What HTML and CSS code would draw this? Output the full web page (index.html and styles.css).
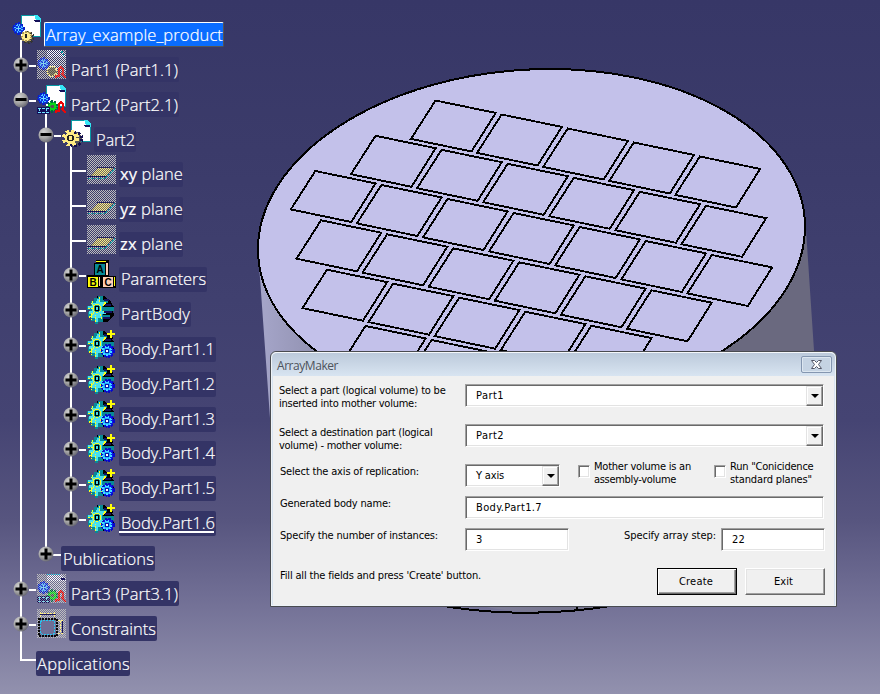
FILE: index.html
```html
<!DOCTYPE html>
<html lang="en">
<head>
<meta charset="utf-8">
<title>ArrayMaker</title>
<link rel="stylesheet" href="styles.css">
</head>
<body>
<svg class="defs" width="0" height="0" aria-hidden="true">
  <defs>
    <path id="dots" fill="none" stroke-dasharray="1 1" d="M0 .5h29M1 1.5h28M0 2.5h29M1 3.5h28M0 4.5h29M1 5.5h28M0 6.5h29M1 7.5h28M0 8.5h29M1 9.5h28M0 10.5h29M1 11.5h28M0 12.5h29M1 13.5h28M0 14.5h29M1 15.5h28M0 16.5h29M1 17.5h28M0 18.5h29M1 19.5h28M0 20.5h29M1 21.5h28M0 22.5h29M1 23.5h28M0 24.5h29M1 25.5h28M0 26.5h29M1 27.5h28M0 28.5h29"/>
    <clipPath id="sheet"><path d="M10 0h14l5 5v17H10z"/></clipPath>
    <clipPath id="slab"><path d="M11 13h15l-7 8H4z"/></clipPath>
    <clipPath id="gears"><path d="M0 7h29v22H0z"/></clipPath>
    <symbol id="page" viewBox="0 0 29 29">
      <path fill="#fff" d="M9 1h14l5 5v15H9z"/>
      <path fill="none" stroke="#0899a5" d="M9.5 16V.5H23M28.500 6v15.500H16"/>
      <path fill="#35e5f5" d="M22 0h3l4 4v3h-4z"/><path fill="#15105a" d="M22 5h6v2h-5z"/>
    </symbol>
    <symbol id="bluegear" viewBox="0 0 29 29">
      <circle cx="6.500" cy="13.500" r="5.300" fill="#0a35e8" stroke="#0a20c8" stroke-width="2" stroke-dasharray="2.400 1"/>
      <circle cx="6.500" cy="13.500" r="3.500" fill="none" stroke="#4fc5ff" stroke-width="1.500" stroke-dasharray="1.700 1"/>
      <path stroke="#70e0ff" d="M6.500 11v5M4 13.500h5"/>
    </symbol>
    <symbol id="redlink" viewBox="0 0 29 29">
      <path fill="none" stroke="#e80808" stroke-width="2" d="M19 28v-2h3v-7l2-2 2 2v4l-2 2m2 0 3 3M22 22v5"/>
    </symbol>
    <symbol id="greengear" viewBox="0 0 29 29">
      <circle cx="15.500" cy="21.500" r="5" fill="#08d918" stroke="#064" stroke-width="2.500" stroke-dasharray="2 1.500"/>
      <circle cx="15.500" cy="21.500" r="2" fill="#555"/>
      <path fill="#15105a" d="M0 22h13v7H0z"/><path fill="none" stroke="#6fe5ff" stroke-dasharray="3 1" d="M1 23.500h11M1 27.500h11M2.500 23v5M9.500 23v5"/>
    </symbol>
    <symbol id="product" viewBox="0 0 29 29">
      <use href="#page"/><use href="#bluegear"/>
      <circle cx="16" cy="22.500" r="5.500" fill="#444" stroke="#333" stroke-width="2" stroke-dasharray="2 1.400"/>
      <circle cx="14.500" cy="21.500" r="4.800" fill="#ffec8c" stroke="#aa9755" stroke-width="2" stroke-dasharray="2 1.400"/>
      <path fill="#222" d="M13 19h2v4h-2z"/>
    </symbol>
    <symbol id="part-hidden" viewBox="0 0 29 29">
      <use href="#dots" stroke="#bdbdbd"/>
      <g clip-path="url(#sheet)"><use href="#dots" stroke="#fff"/></g>
      <path fill="#0899a5" d="M24 1h2v2h-2zM26 4h1v2h-1z"/>
      <use href="#bluegear"/>
      <circle cx="15" cy="21.500" r="4.800" fill="#5f583f" stroke="#ffef83" stroke-width="2" stroke-dasharray="1 1"/>
      <use href="#redlink"/>
      <g clip-path="url(#gears)" opacity=".5"><use href="#dots" stroke="#bdbdbd"/></g>
    </symbol>
    <symbol id="instance" viewBox="0 0 29 29"><use href="#page"/><use href="#bluegear"/><use href="#greengear"/><use href="#redlink"/></symbol>
    <symbol id="instance-hidden" viewBox="0 0 29 29">
      <use href="#dots" stroke="#bdbdbd"/>
      <g clip-path="url(#sheet)"><use href="#dots" stroke="#fff"/></g>
      <path fill="none" stroke="#35e5f5" stroke-dasharray="1 1" d="M10 .5h14"/><path fill="#15105a" d="M24 4h4v2h-4z"/>
      <use href="#bluegear"/><use href="#greengear"/><use href="#redlink"/>
      <g clip-path="url(#gears)" opacity=".6"><use href="#dots" stroke="#bdbdbd"/></g>
    </symbol>
    <symbol id="part" viewBox="0 0 29 29">
      <use href="#page"/>
      <circle cx="13" cy="19" r="7" fill="#555" stroke="#151050" stroke-width="3" stroke-dasharray="2.500 2"/>
      <circle cx="8.500" cy="18" r="6" fill="#ffec83" stroke="#ffec83" stroke-width="5" stroke-dasharray="2.700 2.010"/>
      <circle cx="8.500" cy="18" r="5" fill="#ffec83"/>
      <circle cx="8.500" cy="18" r="2.800" fill="none" stroke="#222" stroke-width="1.400"/>
    </symbol>
    <symbol id="plane" viewBox="0 0 29 29">
      <use href="#dots" stroke="#bdbdbd"/>
      <path fill="#27265f" d="M10 12h17l-1 1H10z"/>
      <path fill="#6b6767" d="M11 13h15l-7 8H4z"/>
      <g clip-path="url(#slab)"><use href="#dots" stroke="#ffef83"/></g>
      <path fill="none" stroke="#14135a" d="M0 21.500h19"/>
      <path fill="none" stroke="#1395a0" stroke-width="1.600" stroke-dasharray="2 1" d="M1 23.500h17l10-10"/>
    </symbol>
    <symbol id="blocks" viewBox="0 0 29 29">
      <path d="M9 0h13v16h7v12H0V15h7V3h2z"/>
      <path fill="#ffff08" d="M9 1h10v1H9zM1 17h10v10H1zM27 17h1v9h-1z"/><path fill="#ffcfb5" d="M19 3h2v12h-2zM16 17h10v10H16zM12 17h1v9h-1z"/><path fill="#088a96" d="M8 4h10v11H8z"/>
      <g class="block-letters"><text x="13" y="12.500">A</text><text x="6" y="25.500">B</text><text x="21" y="25.500">C</text></g>
    </symbol>
    <symbol id="body" viewBox="0 0 29 29">
      <path d="M10 1h8l2 3 4 2 1 4 2 2-1 4 1 4-3 4-4 3h-8l-3-2z"/>
      <path fill="#088a96" d="M11 1h5v4h5v3h-5v4h11v4H16v4h7v3h-7v4h-5v2H8v-3H4v-4H1v-5h2v-2H0v-4h4V6h3V3h4z"/>
      <path fill="#47e0ee" d="M10 4h3v3h4v4h-2v5h4v3h-4v4h-4v4H8v-4H5v-4H2v-3h3v-3H1v-2h4V8h4z"/>
      <path fill="none" stroke="#ffff20" stroke-dasharray="2 1" d="M12.500 2v5M4 8.500l3 2M1 13.500h6M2 22.500l5-5M8.500 27v-7M13 19.500l2 5M16 10.500l3-3M16 16.500h3M5.500 6v4M17.500 4v5M4.500 18v7"/>
      <circle cx="10" cy="13.500" r="3.800" fill="#088a96" stroke="#ffff20"/><path d="M8 11h4v5H8z"/><path fill="#48d7e5" d="M9 12h2v3H9z"/>
      <path fill="#151060" d="M17 4h5v2h-5zM18 9h6v2h-6zM17 16h8v2h-8zM16 22h7v2h-7z"/>
    </symbol>
    <symbol id="body-added" viewBox="0 0 29 29">
      <use href="#body"/><path fill="#000" d="M20 3h3v4h3v2h-6z"/>
      <path fill="#ffff08" d="M23 0h2v3h3v2h-3v3h-2V5h-3V3h3z"/>
      <circle cx="21" cy="21" r="6" fill="#0818e8" stroke="#0808c8" stroke-width="2" stroke-dasharray="2.500 1"/>
      <circle cx="20" cy="21" r="4" fill="#20a8ff" stroke="#42ddff" stroke-width="2" stroke-dasharray="1.700 1"/><path fill="#0818a8" d="M18 19h4v4h-4z"/><path fill="#fff" d="M19 20h2v2h-2z"/>
    </symbol>
    <symbol id="constraint" viewBox="0 0 29 29">
      <use href="#dots" stroke="#bdbdbd"/>
      <path fill="#6f6e96" d="M2 10h17v18H2z"/>
      <path fill="none" stroke="#080808" stroke-width="2" stroke-dasharray="2 1" d="M2 10h18v17H2z"/>
      <path fill="none" stroke="#25c5ef" stroke-dasharray="2 1" d="M3.500 12.500l2-1h12v13l-2 1h-10l-2-2z"/>
      <path fill="none" stroke="#17145a" d="M3 5.500h16M25.500 11v14"/>
      <path fill="none" stroke="#ffef83" stroke-dasharray="2 1" d="M3.500 3v6M17.500 3v6M4 4.500h13M21 11.500h6M21 24.500h6M23.500 12v12"/>
    </symbol>
    <radialGradient id="metal" cx=".35" cy=".3" r=".75"><stop offset="0" stop-color="#d0d0d0"/><stop offset=".55" stop-color="#a5a5a5"/><stop offset="1" stop-color="#656570"/></radialGradient>
    <symbol id="plus" viewBox="0 0 16 16"><circle cx="8" cy="8" r="7.500" fill="url(#metal)"/><path d="M6.500 2.500h3v4h4v3h-4v4h-3v-4h-4v-3h4z"/></symbol>
    <symbol id="minus" viewBox="0 0 16 16"><circle cx="8" cy="8" r="7.500" fill="url(#metal)"/><path d="M2.500 6h11v3h-11z"/></symbol>
  </defs>
</svg>

<main class="viewport">
  <svg class="scene" viewBox="0 0 880 694" aria-hidden="true">
    <defs>
      <linearGradient id="side" gradientUnits="userSpaceOnUse" x1="258" y1="0" x2="810" y2="0"><stop offset="0" stop-color="#a6a6ca"/><stop offset=".12" stop-color="#8f8fae"/><stop offset=".55" stop-color="#77768f"/><stop offset=".85" stop-color="#6a697f"/><stop offset="1" stop-color="#6a697f"/></linearGradient>
      <path id="cell" d="M0 0 60.200 12.400 36 51 -24.500 38.400z"/>
      <g id="row5"><use href="#cell"/><use href="#cell" x="66.100" y="14"/><use href="#cell" x="132.200" y="28"/><use href="#cell" x="198.300" y="42"/><use href="#cell" x="264.400" y="56"/></g>
    </defs>
    <path fill="url(#side)" d="M258 250 283 600H455Q527 620 600 607H831L806 230z"/>
    <path class="edge" d="M440 605.500Q527 620 614 605.500M576.500 606v5"/>
    <circle class="face" r="1" transform="matrix(273.500 -11.300 0 168.600 531.500 238)"/>
    <g class="cells">
      <use href="#row5" x="435.500" y="100.500"/>
      <use href="#row5" x="375.500" y="135.800"/><use href="#cell" x="706" y="205.800"/>
      <use href="#row5" x="315.300" y="171"/><use href="#cell" x="645.800" y="241"/><use href="#cell" x="711.900" y="255"/>
      <use href="#row5" x="321" y="220.300"/><use href="#cell" x="651.500" y="290.300"/>
      <use href="#row5" x="327" y="269.700"/>
      <use href="#cell" x="365.500" y="326"/><use href="#cell" x="431.600" y="340"/>
    </g>
    <path class="wires" d="M21 40V660H37M46 113V555H61M71 146V520M29 66h7M29 101h7M54 136h7M71 171h15M71 206h15M71 241h15M79 276h7M79 311h7M79 346h7M79 381h7M79 416h7M79 450h7M79 485h7M79 520h7M29 590h7M29 625h7"/>
  </svg>

  <ul class="tree">
    <li class="node root"><svg class="icon"><use href="#product"/></svg><span class="name selected"><span data-w="177">Array_example_product</span></span></li>
    <li class="node"><svg class="knob"><use href="#plus"/></svg><svg class="icon"><use href="#part-hidden"/></svg><span class="name"><span data-w="107">Part1 (Part1.1)</span></span></li>
    <li class="node"><svg class="knob"><use href="#minus"/></svg><svg class="icon"><use href="#instance"/></svg><span class="name"><span data-w="107">Part2 (Part2.1)</span></span></li>
    <li class="node l2"><svg class="knob"><use href="#minus"/></svg><svg class="icon"><use href="#part"/></svg><span class="name"><span data-w="39">Part2</span></span></li>
    <li class="node l3"><i class="knob"></i><svg class="icon"><use href="#plane"/></svg><span class="name tight"><span data-w="63"><b>xy</b> plane</span></span></li>
    <li class="node l3"><i class="knob"></i><svg class="icon"><use href="#plane"/></svg><span class="name tight"><span data-w="63"><b>yz</b> plane</span></span></li>
    <li class="node l3"><i class="knob"></i><svg class="icon"><use href="#plane"/></svg><span class="name tight"><span data-w="63"><b>zx</b> plane</span></span></li>
    <li class="node l3"><svg class="knob"><use href="#plus"/></svg><svg class="icon"><use href="#blocks"/></svg><span class="name"><span data-w="85">Parameters</span></span></li>
    <li class="node l3"><svg class="knob"><use href="#plus"/></svg><svg class="icon"><use href="#body"/></svg><span class="name"><span data-w="69">PartBody</span></span></li>
    <li class="node l3"><svg class="knob"><use href="#plus"/></svg><svg class="icon"><use href="#body-added"/></svg><span class="name"><span data-w="94">Body.Part1.1</span></span></li>
    <li class="node l3"><svg class="knob"><use href="#plus"/></svg><svg class="icon"><use href="#body-added"/></svg><span class="name"><span data-w="94">Body.Part1.2</span></span></li>
    <li class="node l3 short-row"><svg class="knob"><use href="#plus"/></svg><svg class="icon"><use href="#body-added"/></svg><span class="name"><span data-w="94">Body.Part1.3</span></span></li>
    <li class="node l3"><svg class="knob"><use href="#plus"/></svg><svg class="icon"><use href="#body-added"/></svg><span class="name"><span data-w="94">Body.Part1.4</span></span></li>
    <li class="node l3"><svg class="knob"><use href="#plus"/></svg><svg class="icon"><use href="#body-added"/></svg><span class="name"><span data-w="94">Body.Part1.5</span></span></li>
    <li class="node l3"><svg class="knob"><use href="#plus"/></svg><svg class="icon"><use href="#body-added"/></svg><span class="name current"><span data-w="94">Body.Part1.6</span></span></li>
    <li class="node l2 bare"><svg class="knob"><use href="#plus"/></svg><span class="name"><span data-w="91">Publications</span></span></li>
    <li class="node"><svg class="knob"><use href="#plus"/></svg><svg class="icon"><use href="#instance-hidden"/></svg><span class="name"><span data-w="107">Part3 (Part3.1)</span></span></li>
    <li class="node"><svg class="knob"><use href="#plus"/></svg><svg class="icon"><use href="#constraint"/></svg><span class="name"><span data-w="85">Constraints</span></span></li>
    <li class="node bare"><i class="knob"></i><span class="name tight"><span data-w="93">Applications</span></span></li>
  </ul>

  <section class="dialog">
    <header class="titlebar"><span data-w="61">ArrayMaker</span>
      <button class="close" aria-label="Close"><svg width="11" height="9" viewBox="0 0 11 9"><path d="M.5 .5h3l2 2 2-2h3L7.500 4.500l3 4h-3l-2-2-2 2h-3l3-4z" fill="#fff" stroke="#535666"/></svg></button>
    </header>
    <div class="form">
      <div class="line tall">
        <label class="caption first"><span data-w="166.5">Select a part (logical volume) to be</span><span data-w="138">inserted into mother volume:</span></label>
        <div class="field wide"><span data-w="28">Part1</span><i class="drop"></i></div>
      </div>
      <div class="line tall">
        <label class="caption second"><span data-w="153.5">Select a destination part (logical</span><span data-w="123">volume) - mother volume:</span></label>
        <div class="field wide"><span data-w="28">Part2</span><i class="drop"></i></div>
      </div>
      <div class="line">
        <label class="caption"><span data-w="139">Select the axis of replication:</span></label>
        <div class="field axis"><span data-w="28">Y axis</span><i class="drop"></i></div>
        <label class="check assembly"><i class="box"></i><span class="lines"><span data-w="97">Mother volume is an</span><span data-w="82">assembly-volume</span></span></label>
        <label class="check coincide"><i class="box"></i><span class="lines"><span data-w="83.5">Run "Conicidence</span><span data-w="82">standard planes"</span></span></label>
      </div>
      <div class="line">
        <label class="caption"><span data-w="111">Generated body name:</span></label>
        <div class="field wide"><span data-w="66">Body.Part1.7</span></div>
      </div>
      <div class="line tall">
        <label class="caption"><span data-w="158">Specify the number of instances:</span></label>
        <div class="field short"><span>3</span></div>
        <label class="step"><span data-w="92">Specify array step:</span></label>
        <div class="field short"><span data-w="13">22</span></div>
      </div>
      <div class="line">
        <span class="caption hint"><span data-w="201">Fill all the fields and press 'Create' button.</span></span>
        <button class="btn default"><span data-w="34">Create</span></button>
        <button class="btn exit"><span data-w="19">Exit</span></button>
      </div>
    </div>
  </section>
</main>
<script src="fit.js"></script>
</body>
</html>
```
FILE: styles.css
```css
* { box-sizing: border-box; }
body { margin: 0; }
.defs { position: absolute; }
.viewport {
  position: relative;
  width: 880px;
  height: 694px;
  overflow: hidden;
  background: linear-gradient(#373767 0, #3b3b6a 150px, #40406f 300px, #454473 420px, #57557f 520px, #706e94 595px, #9291ae 694px);
}
.scene { position: absolute; inset: 0; width: 880px; height: 694px; }
.face { fill: #c3c1ea; stroke: #000; stroke-width: 2; vector-effect: non-scaling-stroke; shape-rendering: crispEdges; }
.edge { fill: none; stroke: #000; stroke-width: 2; shape-rendering: crispEdges; }
.cells { fill: none; stroke: #000; stroke-width: 1.9; shape-rendering: crispEdges; }
.wires { fill: none; stroke: #fff; stroke-width: 2; shape-rendering: crispEdges; }
.block-letters { font: bold 10px "Liberation Sans", sans-serif; text-anchor: middle; }

.tree {
  position: relative;
  margin: 0;
  padding: 14px 0 0 14px;
  list-style: none;
  font: 300 16.5px/25px "Open Sans", "Noto Sans", sans-serif;
  color: #fff;
  -webkit-text-stroke: .2px #fff;
}
.node { display: flex; align-items: flex-start; height: 35px; padding-top: 1px; }
.short-row { height: 34px; }
.root { margin-left: -2px; }
.l2 { padding-left: 25px; }
.l3 { padding-left: 50px; }
.knob { width: 16px; height: 16px; margin: 7px 8px 0 -1px; flex: none; }
.bare > .knob { margin-right: 7px; }
.icon { width: 29px; height: 29px; flex: none; shape-rendering: crispEdges; }
.name { height: 25px; margin: 7px 0 0; padding: 0 1px 0 2px; border-radius: 2px; background: #343466; white-space: nowrap; }
.l3 .name { line-height: 24px; }
.icon + .name { margin-left: 3px; }
.tight { padding: 0 0 0 1px; }
.selected { padding: 0 0 0 1px; background: #0a6cff; border: 1px solid #fff; border-right-color: #555; border-bottom-color: #555; line-height: 23px; }
.current { background: linear-gradient(#fff, #fff) 0 20px / 95px 2px no-repeat #343466; }
.name b { font-weight: 400; }
[data-w] { display: inline-block; white-space: nowrap; }

.dialog {
  position: absolute;
  left: 270px;
  top: 351px;
  width: 567px;
  height: 256px;
  padding: 0 2px 2px;
  border: 1px solid #494b50;
  border-radius: 6px 6px 0 0;
  background: #d8e4f1;
  box-shadow: inset 0 0 0 1px #eef3f8;
  font: 11px/13px "DejaVu Sans Condensed", "DejaVu Sans", sans-serif;
  color: #000;
}
.titlebar {
  display: flex;
  justify-content: space-between;
  align-items: flex-start;
  height: 24px;
  margin: 0 -1px;
  padding: 4px 3px 0 5px;
  border-top: 1px solid #f4f7fa;
  border-radius: 5px 5px 0 0;
  background: linear-gradient(#bccadb, #d8e4f1);
  font: 12px/17px "Open Sans", sans-serif;
  color: #4d525b;
}
.close {
  display: flex;
  align-items: center;
  justify-content: center;
  width: 31px;
  height: 17px;
  margin-top: -1px;
  padding: 0;
  border: 1px solid #8496b0;
  border-radius: 2px;
  background: #c5d3e3;
  box-shadow: inset 0 0 0 1px #dce6f0;
}
.form { height: 229px; padding: 8px 9px 0 0; background: #f0f0f0; }
.line { display: flex; align-items: flex-start; height: 32px; }
.tall { height: 40px; }
.caption { width: 192px; flex: none; padding: 1px 0 0 7px; }
.caption > span { display: table; }
.first { padding: 0 0 0 6px; }
.second { padding: 2px 0 0 6px; }
.field {
  display: flex;
  height: 23px;
  padding-left: 10px;
  border: 1px solid;
  border-color: #a0a0a0 #fff #fff #a0a0a0;
  background: #fff;
  box-shadow: inset 1px 1px #696969, inset -1px -1px #e3e3e3;
  line-height: 21px;
}
.wide { width: 359px; }
.axis { width: 95px; }
.short { width: 104px; }
.drop {
  display: flex;
  align-items: center;
  justify-content: center;
  width: 17px;
  height: 20px;
  margin: 1px 0 0 auto;
  border: 1px solid;
  border-color: #e3e3e3 #696969 #696969 #e3e3e3;
  background: #f0f0f0;
  box-shadow: inset -1px -1px #a0a0a0, inset 1px 1px #fff;
}
.drop::after { content: ""; border: 4px solid transparent; border-top-color: #000; border-bottom: 0; }
.check { display: flex; align-items: flex-start; padding-top: 1px; }
.box { width: 12px; height: 13px; border: 1px solid; border-color: #a0a0a0 #fff #fff #a0a0a0; background: #fff; box-shadow: inset 1px 1px #696969, inset -1px -1px #e3e3e3; }
.lines { margin: -5px 0 0 4px; }
.lines span { display: table; }
.assembly { width: 136px; margin-left: 18px; }
.step { margin-left: auto; padding: 1px 5px 0 0; }
.hint { width: 384px; }
.btn {
  width: 80px;
  height: 27px;
  margin-right: 8px;
  padding: 0 2px 0 0;
  flex: none;
  border: 1px solid;
  border-color: #fff #696969 #696969 #fff;
  background: #f0f0f0;
  box-shadow: inset -1px -1px #a0a0a0, inset 1px 1px #e3e3e3;
  font: inherit;
  color: #000;
}
.exit { padding-right: 3px; }
.default { border-color: #000; box-shadow: inset 1px 1px #fff, inset -1px -1px #696969, inset -2px -2px #a0a0a0; }
```
FILE: fit.js
```js
// Spread each caption's tracking so it fills its designed width.
document.querySelectorAll("[data-w]").forEach(function (el) {
  var gap = (Number(el.dataset.w) - el.getBoundingClientRect().width) / el.textContent.length;
  el.style.letterSpacing = gap + "px";
});
```
